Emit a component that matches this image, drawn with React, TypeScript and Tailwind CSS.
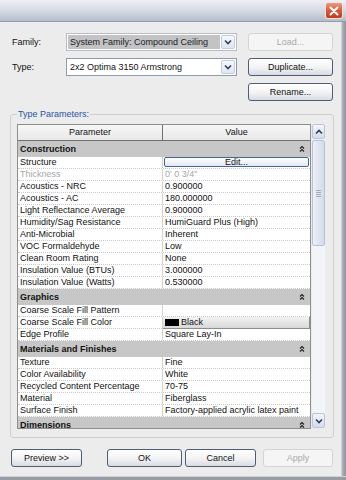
import { ReactNode } from "react";

type Row =
  | { kind: "group"; label: string }
  | { kind: "row"; param: string; value?: string; dim?: boolean; edit?: boolean; swatch?: boolean };

const rows: Row[] = [
  { kind: "group", label: "Construction" },
  { kind: "row", param: "Structure", edit: true },
  { kind: "row", param: "Thickness", value: "0'  0 3/4\"", dim: true },
  { kind: "row", param: "Acoustics - NRC", value: "0.900000" },
  { kind: "row", param: "Acoustics - AC", value: "180.000000" },
  { kind: "row", param: "Light Reflectance Average", value: "0.900000" },
  { kind: "row", param: "Humidity/Sag Resistance", value: "HumiGuard Plus (High)" },
  { kind: "row", param: "Anti-Microbial", value: "Inherent" },
  { kind: "row", param: "VOC Formaldehyde", value: "Low" },
  { kind: "row", param: "Clean Room Rating", value: "None" },
  { kind: "row", param: "Insulation Value (BTUs)", value: "3.000000" },
  { kind: "row", param: "Insulation Value (Watts)", value: "0.530000" },
  { kind: "group", label: "Graphics" },
  { kind: "row", param: "Coarse Scale Fill Pattern", value: "" },
  { kind: "row", param: "Coarse Scale Fill Color", swatch: true },
  { kind: "row", param: "Edge Profile", value: "Square Lay-In" },
  { kind: "group", label: "Materials and Finishes" },
  { kind: "row", param: "Texture", value: "Fine" },
  { kind: "row", param: "Color Availability", value: "White" },
  { kind: "row", param: "Recycled Content Percentage", value: "70-75" },
  { kind: "row", param: "Material", value: "Fiberglass" },
  { kind: "row", param: "Surface Finish", value: "Factory-applied acrylic latex paint" },
  { kind: "group", label: "Dimensions" },
];

const Chevron = ({ up = false }: { up?: boolean }) => (
  <svg width="8" height="6" viewBox="0 0 8 6">
    <path
      d={up ? "M1 4.5 L4 1.5 L7 4.5" : "M1 1.5 L4 4.5 L7 1.5"}
      fill="none"
      stroke="#2f3f5f"
      strokeWidth="1.6"
    />
  </svg>
);

const Collapse = () => (
  <svg width="6" height="8" viewBox="0 0 6 8">
    <path d="M1 3.5 L3 1.5 L5 3.5 M1 6.5 L3 4.5 L5 6.5" fill="none" stroke="#222" strokeWidth="1.2" />
  </svg>
);

const Button = ({ children, disabled = false }: { children: ReactNode; disabled?: boolean }) => (
  <div
    className={
      disabled
        ? "h-[18px] flex items-center justify-center rounded-[3px] border border-[#d4d4d4] bg-[#f5f5f5] text-[#a9a9a9]"
        : "h-[18px] flex items-center justify-center rounded-[3px] border border-[#4e5d74] bg-gradient-to-b from-[#ffffff] via-[#f4f4f6] to-[#d9dbe2] text-[#111]"
    }
  >
    {children}
  </div>
);

const Combo = ({ text, selected = false }: { text: string; selected?: boolean }) => (
  <div
    className={
      selected
        ? "h-[18px] flex items-stretch border border-[#b8bcc4] bg-white p-[1px]"
        : "h-[18px] flex items-stretch border border-[#8c9bb0] bg-white p-[1px]"
    }
  >
    <div className={selected ? "flex-1 flex items-center pl-[2px] bg-[#c3c3c6] text-[#1a1a1a]" : "flex-1 flex items-center pl-[2px] text-[#111]"}>
      {text}
    </div>
    <div className="w-[14px] ml-[1px] flex items-center justify-center rounded-[2px] border border-[#c3cde0] bg-gradient-to-b from-[#f6f8fc] to-[#dfe5f1]">
      <Chevron />
    </div>
  </div>
);

function TableRow({ row }: { row: Row }) {
  if (row.kind === "group") {
    return (
      <div className="h-[16px] shrink-0 flex items-center justify-between bg-[#c7c7c7] pl-[2px] pr-[5px] font-bold text-[#111]">
        <span>{row.label}</span>
        <Collapse />
      </div>
    );
  }
  return (
    <div className="h-[12px] shrink-0 grid grid-cols-[145px_1fr] border-b border-dotted border-[#c9c9c9] bg-white leading-[11px]">
      <div className={row.dim ? "pl-[2px] border-r border-[#d2d2d2] text-[#a8a8a8]" : "pl-[2px] border-r border-[#d2d2d2] text-[#111]"}>
        {row.param}
      </div>
      {row.edit ? (
        <div className="pl-[1px] pr-[1px]">
          <div className="h-[10px] flex items-center justify-center rounded-[2px] border border-[#456597] bg-gradient-to-b from-white to-[#e3e8f2] leading-[9px] text-[#111]">
            Edit...
          </div>
        </div>
      ) : row.swatch ? (
        <div className="flex items-center gap-[2px] pl-[2px] bg-gradient-to-b from-[#f2f2f2] to-[#d8d8d8] border-r border-b border-[#8d8d8d] text-[#111]">
          <span className="w-[14px] h-[7px] bg-black" />
          <span>Black</span>
        </div>
      ) : (
        <div className={row.dim ? "pl-[2px] text-[#a8a8a8]" : "pl-[2px] text-[#111]"}>{row.value}</div>
      )}
    </div>
  );
}

const Scrollbar = () => (
  <div className="w-[13px] h-[304px] flex flex-col bg-[#f3f4f7]">
    <div className="h-[15px] flex items-center justify-center rounded-[2px] border border-[#bac5da] bg-gradient-to-b from-[#f2f5fb] to-[#d5dcec]">
      <Chevron up />
    </div>
    <div className="h-[106px] mt-[1px] flex items-center justify-center rounded-[2px] border border-[#b9c2d6] bg-gradient-to-r from-[#edf0f8] to-[#d3dae9]">
      <div className="flex flex-col gap-[1px]">
        <span className="block w-[5px] h-[1px] bg-[#a3adc4]" />
        <span className="block w-[5px] h-[1px] bg-[#a3adc4]" />
        <span className="block w-[5px] h-[1px] bg-[#a3adc4]" />
        <span className="block w-[5px] h-[1px] bg-[#a3adc4]" />
      </div>
    </div>
    <div className="flex-1" />
    <div className="h-[15px] flex items-center justify-center rounded-[2px] border border-[#bac5da] bg-gradient-to-b from-[#f2f5fb] to-[#d5dcec]">
      <Chevron />
    </div>
  </div>
);

export default function App() {
  return (
    <div className="w-[346px] h-[480px] flex flex-col overflow-hidden bg-[#ececec] font-['Liberation_Sans',Arial,sans-serif] text-[9px] leading-[11px] text-[#111]">
      {/* title bar */}
      <div className="h-[22px] shrink-0 flex items-center justify-end pr-[3px] bg-gradient-to-b from-[#eef0f5] via-[#d6dae4] to-[#b6bccb] border-b border-[#959cae]">
        <div className="w-[18px] h-[17px] flex items-center justify-center rounded-[3px] border border-[#f4e4de] bg-gradient-to-b from-[#eb9a80] via-[#d65a3c] to-[#c1391c]">
          <svg width="10" height="10" viewBox="0 0 10 10">
            <path d="M1.5 1.5 L8.5 8.5 M8.5 1.5 L1.5 8.5" stroke="white" strokeWidth="2" strokeLinecap="round" />
          </svg>
        </div>
      </div>

      <div className="flex-1 flex">
        <div className="flex-1 flex flex-col">
          {/* family / type */}
          <div className="grid grid-cols-[43px_171px_85px] gap-x-[11px] gap-y-[7px] pl-[12px] pt-[11px] items-center">
            <span>Family:</span>
            <Combo text="System Family: Compound Ceiling" selected />
            <Button disabled>Load...</Button>
            <span>Type:</span>
            <Combo text="2x2 Optima 3150 Armstrong" />
            <Button>Duplicate...</Button>
            <span />
            <span />
            <Button>Rename...</Button>
          </div>

          {/* type parameters */}
          <fieldset className="mt-[8px] ml-[10px] w-[324px] h-[329px] rounded-[3px] border border-[#cfcfcf] pl-[6px] pr-[7px]">
            <legend className="px-[1px] leading-[11px] text-[#2855a0]">Type Parameters:</legend>
            <div className="mt-[4px] flex gap-[1px]">
              <div className="w-[294px] h-[305px] flex flex-col overflow-hidden border border-[#8e8e8e] bg-white">
                <div className="h-[16px] shrink-0 grid grid-cols-[145px_1fr] bg-gradient-to-b from-[#f7f7f7] to-[#e8e8e8] border-b border-[#6f6f6f]">
                  <div className="flex items-center justify-center border-r border-[#6f6f6f]">Parameter</div>
                  <div className="flex items-center justify-center">Value</div>
                </div>
                {rows.map((row, i) => (
                  <TableRow key={i} row={row} />
                ))}
              </div>
              <Scrollbar />
            </div>
          </fieldset>

          {/* bottom buttons */}
          <div className="mt-[11px] flex pl-[11px]">
            <div className="w-[71px]">
              <Button>Preview &gt;&gt;</Button>
            </div>
            <div className="w-[75px] ml-[25px]">
              <Button>OK</Button>
            </div>
            <div className="w-[71px] ml-[3px]">
              <Button>Cancel</Button>
            </div>
            <div className="w-[70px] ml-[7px]">
              <Button disabled>Apply</Button>
            </div>
          </div>
        </div>
        <div className="w-[5px] shrink-0 border-l border-[#d0d1d6] bg-gradient-to-r from-[#b4b6bd] to-[#8d9099]" />
      </div>
      <div className="h-[4px] shrink-0 border-t border-[#d0d1d6] bg-[#9a9ca4]" />
    </div>
  );
}
